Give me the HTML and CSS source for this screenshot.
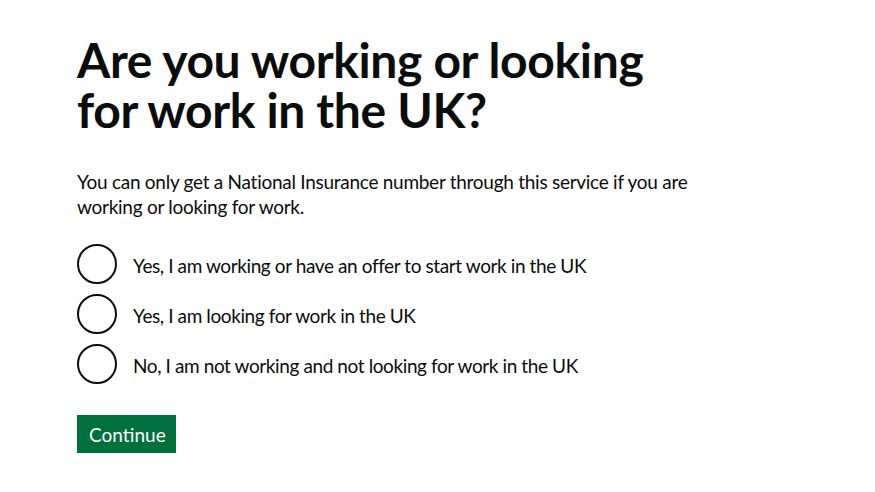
FILE: index.html
```html
<!DOCTYPE html>
<html lang="en">
<head>
<meta charset="utf-8">
<title>Are you working or looking for work in the UK?</title>
<link rel="stylesheet" href="styles.css">
</head>
<body>
<main class="main">
  <form class="form">
    <fieldset class="fieldset">
      <legend class="legend">
        <h1 class="heading">Are you working or looking for work in the UK?</h1>
      </legend>
      <p class="hint">You can only get a National Insurance number through this service if you are working or looking for work.</p>
      <div class="radios">
        <label class="radio">
          <input class="radio-input" type="radio" name="work" value="working">
          <span class="radio-circle"></span>
          <span class="radio-label">Yes, I am working or have an offer to start work in the UK</span>
        </label>
        <label class="radio">
          <input class="radio-input" type="radio" name="work" value="looking">
          <span class="radio-circle"></span>
          <span class="radio-label">Yes, I am looking for work in the UK</span>
        </label>
        <label class="radio">
          <input class="radio-input" type="radio" name="work" value="neither">
          <span class="radio-circle"></span>
          <span class="radio-label">No, I am not working and not looking for work in the UK</span>
        </label>
      </div>
    </fieldset>
    <button class="button" type="submit">Continue</button>
  </form>
</main>
</body>
</html>
```

FILE: styles.css
```css
html, body {
  margin: 0;
  padding: 0;
  background: #ffffff;
}

body {
  font-family: Lato, "Liberation Sans", Arial, sans-serif;
  color: #0b0c0c;
}

.main {
  padding: 35px 30px 0 77px;
}

.form {
  max-width: 640px;
}

.fieldset {
  margin: 0;
  padding: 0;
  border: 0;
  min-width: 0;
}

.legend {
  padding: 0;
  max-width: 600px;
}

.heading {
  margin: 0 0 34px 0;
  font-size: 48px;
  line-height: 50px;
  font-weight: 700;
  letter-spacing: -0.35px;
}

.hint {
  margin: 0 0 25px 0;
  font-size: 19px;
  line-height: 25px;
  letter-spacing: -0.27px;
  max-width: 640px;
}

.radios {
  display: flex;
  flex-direction: column;
  gap: 10px;
}

.radio {
  display: flex;
  align-items: center;
  min-height: 40px;
  cursor: pointer;
}

.radio-input {
  position: absolute;
  opacity: 0;
  width: 0;
  height: 0;
  margin: 0;
}

.radio-circle {
  flex: 0 0 auto;
  width: 40px;
  height: 40px;
  box-sizing: border-box;
  border: 2px solid #0b0c0c;
  border-radius: 50%;
}

.radio-label {
  padding: 6px 15px 4px 16px;
  font-size: 19px;
  line-height: 25px;
  letter-spacing: -0.4px;
}

.button {
  margin-top: 31px;
  display: inline-block;
  padding: 7px 10px 6px 12px;
  border: 0;
  border-radius: 0;
  background: #00703c;
  color: #ffffff;
  font-family: inherit;
  font-size: 19px;
  line-height: 25px;
  box-shadow: 0 2px 0 #002d18;
  cursor: pointer;
}
```
